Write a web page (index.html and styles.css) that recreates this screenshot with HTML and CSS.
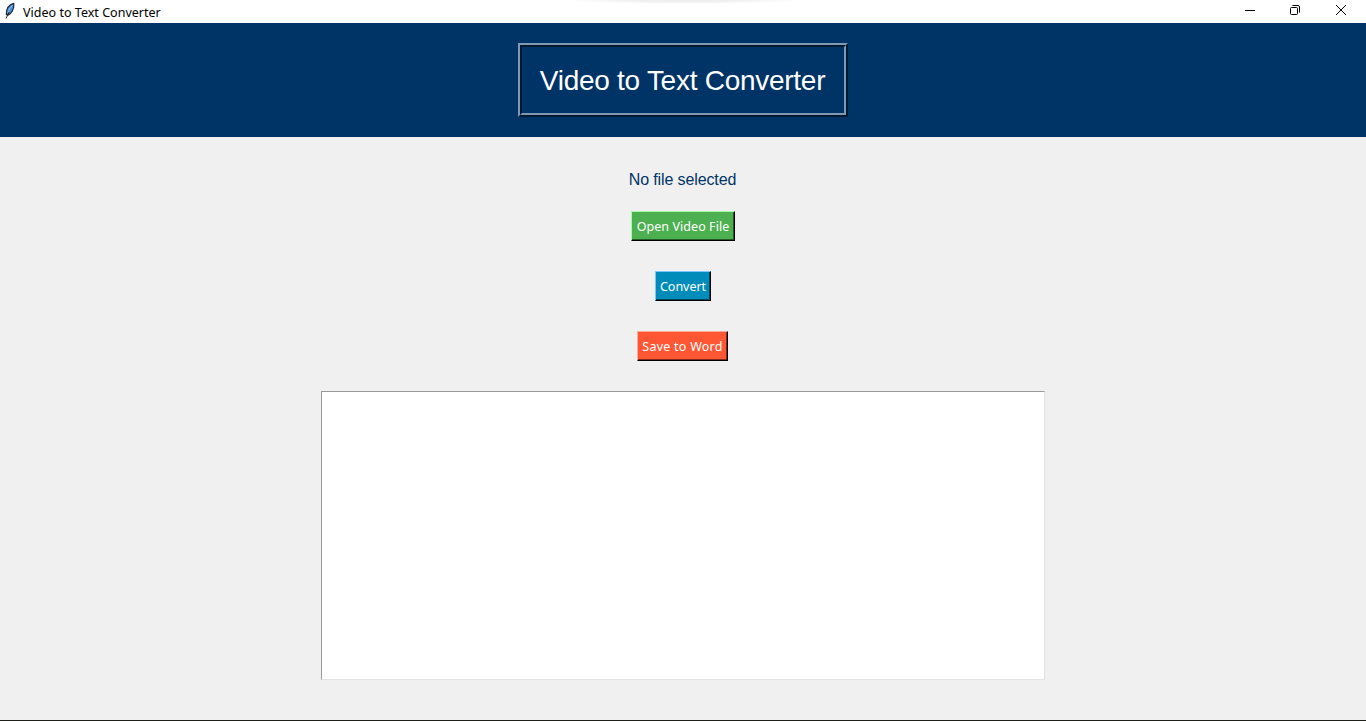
FILE: index.html
```html
<!DOCTYPE html>
<html lang="en">
<head>
<meta charset="utf-8">
<title>Video to Text Converter</title>
<link rel="stylesheet" href="styles.css">
</head>
<body>
<div class="window">
  <header class="titlebar">
    <svg class="feather" width="12" height="18" viewBox="0 0 12 18">
      <path d="M9.8 1.4 C5.5 2.5 2.2 6.5 2.3 12.6 L4 13.2 C7.5 11.5 10.6 7 9.8 1.4Z" fill="#4a8fd6" stroke="#182030" stroke-width="1.1"/>
      <path d="M8.5 3.500 C6 5.500 4.500 8 4 11" fill="none" stroke="#8dbcf0" stroke-width="1"/>
      <path d="M5 10 L2 16.5" fill="none" stroke="#222" stroke-width="1"/>
    </svg>
    <span class="title">Video to Text Converter</span>
    <div class="controls">
      <svg width="46" height="22" viewBox="0 0 46 22"><path d="M19 10.5H29" stroke="#000"/></svg>
      <svg width="46" height="22" viewBox="0 0 46 22" fill="none" stroke="#000"><rect x="18.500" y="7.500" width="7" height="7" rx="1"/><path d="M20.500 5.500H26Q27.500 5.500 27.500 7V12.500"/></svg>
      <svg width="46" height="22" viewBox="0 0 46 22"><path d="M18 5L28 15M28 5L18 15" stroke="#000"/></svg>
    </div>
  </header>
  <div class="banner">
    <div class="heading-outer"><h1 class="heading">Video to Text Converter</h1></div>
  </div>
  <main class="content">
    <p class="status">No file selected</p>
    <button class="btn btn-open">Open Video File</button>
    <button class="btn btn-convert">Convert</button>
    <button class="btn btn-save">Save to Word</button>
    <div class="output"></div>
  </main>
</div>
</body>
</html>
```
FILE: styles.css
```css
* { box-sizing: border-box; }
body { margin: 0; }
.window {
  width: 1366px;
  height: 721px;
  display: flex;
  flex-direction: column;
  background: #f0f0f0;
  border-bottom: 1px solid #1f1f1a;
  overflow: hidden;
}
.titlebar {
  height: 23px;
  flex: none;
  display: flex;
  align-items: flex-start;
  background: radial-gradient(ellipse 118px 4px at 684px 0, #efefef 40%, #fff) #fff;
  padding: 0 2px 0 4px;
}
.feather { margin-top: 2px; }
.title {
  margin-left: 7px;
  flex: 1;
  font: 12.5px/18px "Noto Sans", sans-serif;
  letter-spacing: 0.02px;
  padding-top: 4px;
  color: #000;
}
.controls { display: flex; }
.controls svg { display: block; }
.banner {
  height: 114px;
  flex: none;
  background: #003366;
  display: flex;
  justify-content: center;
  align-items: flex-start;
  padding-top: 20px;
}
.heading-outer {
  width: 330px;
  height: 74px;
  border: 2px solid;
  border-color: #7f99b2 #001933 #001933 #7f99b2;
}
.heading {
  margin: 0;
  height: 70px;
  border: 2px solid;
  border-color: #001933 #7f99b2 #7f99b2 #001933;
  padding-right: 1px;
  font: 400 28px/68px "Liberation Sans", Arial, sans-serif;
  letter-spacing: -0.27px;
  text-align: center;
  white-space: nowrap;
  color: #fff;
}
.content {
  display: flex;
  flex-direction: column;
  align-items: center;
}
.status {
  margin: 32px 0 21px;
  padding-right: 1px;
  font: 16px/21px "Liberation Sans", Arial, sans-serif;
  letter-spacing: -0.12px;
  color: #003366;
}
.btn {
  height: 30px;
  margin: 0 0 30px;
  padding: 2px 0 0;
  border: 1px solid;
  border-right-color: #000;
  border-bottom-color: #000;
  border-radius: 0;
  font: 12.5px/26px "Noto Sans", sans-serif;
  white-space: nowrap;
  color: #fff;
}
.btn-open {
  width: 104px;
  letter-spacing: 0.06px;
  background: #4caf50;
  border-top-color: #a5ffa7;
  border-left-color: #a5ffa7;
  box-shadow: inset -1px -1px #265728;
}
.btn-convert {
  width: 56px;
  letter-spacing: -0.04px;
  background: #008cba;
  border-top-color: #7fc5ff;
  border-left-color: #7fc5ff;
  box-shadow: inset -1px -1px #00465d;
}
.btn-save {
  width: 91px;
  margin-right: 1px;
  letter-spacing: 0.24px;
  background: #ff5733;
  border-top-color: #ffab99;
  border-left-color: #ffab99;
  box-shadow: inset -1px -1px #7f2b19;
}
.output {
  width: 724px;
  height: 289px;
  background: #fff;
  border: 1px solid;
  border-color: #999 #e3e3e3 #e3e3e3 #999;
}
```
